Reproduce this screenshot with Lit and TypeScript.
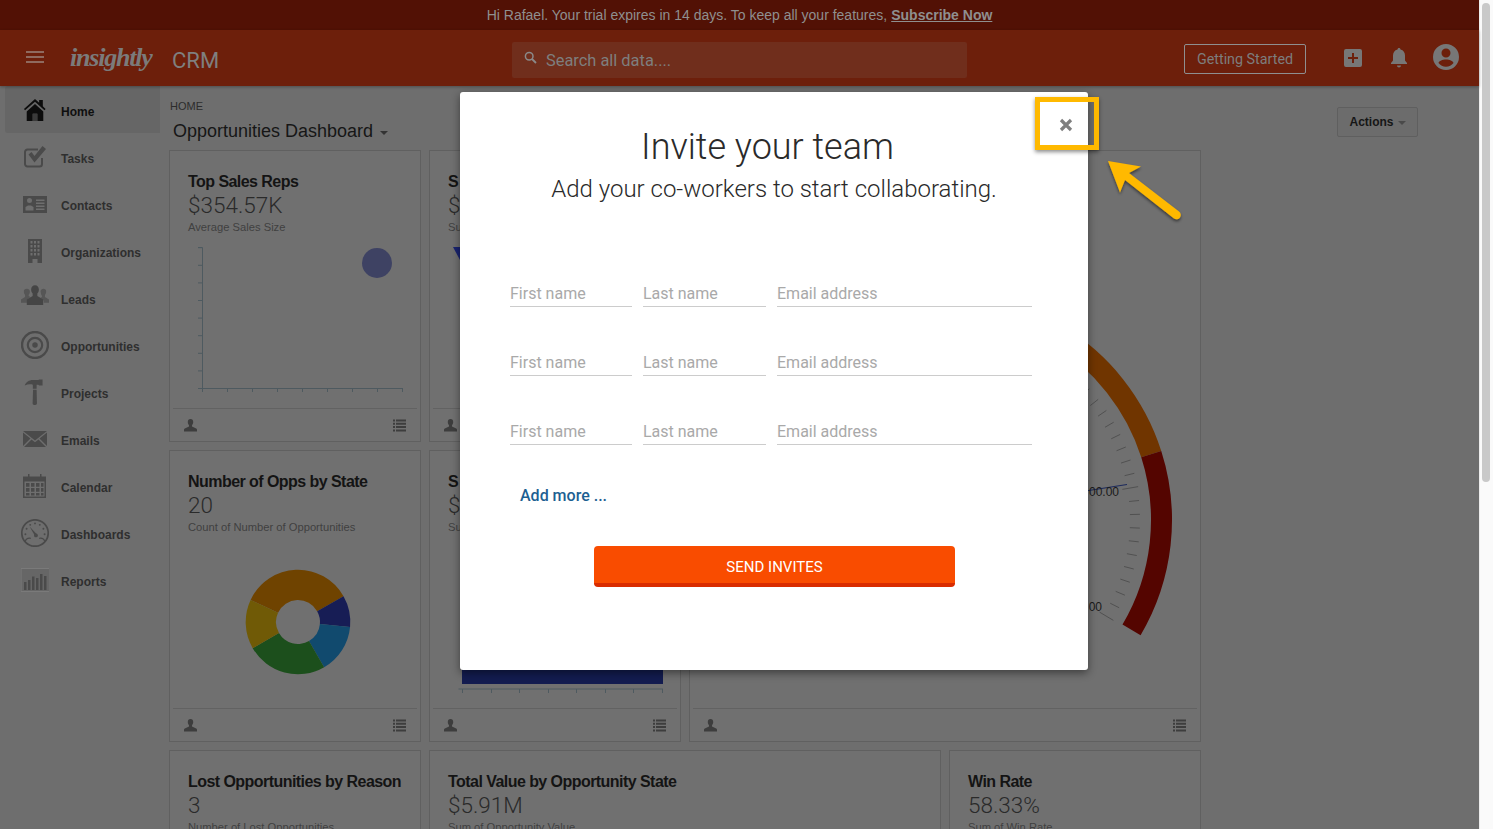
import { LitElement, html, css, svg } from 'lit';
import { customElement } from 'lit/decorators.js';

// point on the gauge, angle in degrees above horizontal
const CX = 945;
const CY = 520;
const pt = (r: number, deg: number) => {
  const a = (deg * Math.PI) / 180;
  return [CX + r * Math.cos(a), CY - r * Math.sin(a)];
};
const arc = (from: number, to: number, color: string) => {
  const [ax, ay] = pt(227, from);
  const [bx, by] = pt(227, to);
  const [cx, cy] = pt(206, to);
  const [dx, dy] = pt(206, from);
  return svg`<path fill=${color} d="M${ax} ${ay}A227 227 0 0 0 ${bx} ${by}L${cx} ${cy}A206 206 0 0 1 ${dx} ${dy}Z"></path>`;
};
const ticks = () => {
  const out = [];
  for (let i = 0; i <= 20; i++) {
    const deg = 50.4 - i * 4.06;
    const major = i % 10 === 0;
    const [x1, y1] = pt(major ? 180 : 185, deg);
    const [x2, y2] = pt(major ? 196 : 195, deg);
    out.push(svg`<line x1=${x1} y1=${y1} x2=${x2} y2=${y2} stroke="#515151" stroke-width="1"></line>`);
  }
  return out;
};

const wedge = (cx: number, cy: number, r: number, r0: number, a: number, b: number, color: string) => {
  const p = (rad: number, deg: number) => [cx + rad * Math.sin((deg * Math.PI) / 180), cy - rad * Math.cos((deg * Math.PI) / 180)];
  const [ax, ay] = p(r, a);
  const [bx, by] = p(r, b);
  const [c, d] = p(r0, b);
  const [e, f] = p(r0, a);
  const large = b - a > 180 ? 1 : 0;
  return svg`<path fill=${color} d="M${ax} ${ay}A${r} ${r} 0 ${large} 1 ${bx} ${by}L${c} ${d}A${r0} ${r0} 0 ${large} 0 ${e} ${f}Z"></path>`;
};

const axisTicks = () => {
  const out = [];
  for (let i = 0; i < 9; i++) {
    const x = 202.5 + i * 25;
    out.push(svg`<line x1=${x} y1="388" x2=${x} y2="392" stroke="#4e5a60"></line>`);
  }
  for (let i = 0; i < 9; i++) {
    const y = 388.5 - i * 17.6;
    out.push(svg`<line x1="198" y1=${y} x2="202" y2=${y} stroke="#4e5a60"></line>`);
  }
  return out;
};

const personIcon = html`<svg class="foot-icon" viewBox="0 0 13 13"><path fill="#3d3d3d" d="M6.5 0C4.7 0 3.8 1.3 3.8 3c0 1.300.5 2.500 1.200 3.200v1.300L.8 9.400C.2 9.700 0 10.200 0 11v1.500h13V11c0-.8-.2-1.300-.8-1.600L8 7.500V6.200C8.700 5.500 9.200 4.300 9.200 3 9.200 1.300 8.300 0 6.500 0z"></path></svg>`;
const listIcon = html`<svg class="foot-icon" viewBox="0 0 13 12"><path fill="#3d3d3d" d="M0 0h2v2H0zM3 0h10v2H3zM0 3.300h2v2H0zM3 3.300h10v2H3zM0 6.600h2v2H0zM3 6.600h10v2H3zM0 9.900h2v2H0zM3 9.900h10v2H3z"></path></svg>`;

const navIcons: Record<string, unknown> = {
  Home: svg`<path fill="#0c0c0c" d="M12 0l4.500 4V1h4v7l3 3-1.200 1.400L12 3 1.200 12.400 0 11zM3 13.500L12 5.500l9 8V24h-6.500v-8h-5v8H3z"></path><path fill="#3a3a3a" d="M9.500 16h5v8h-5z"></path>`,
  Tasks: svg`<path fill="none" stroke="#4a4a4a" stroke-width="2" d="M19 13v6a2.500 2.500 0 0 1-2.500 2.500h-12A2.500 2.500 0 0 1 2 19V7a2.500 2.500 0 0 1 2.500-2.500H15"></path><path fill="#4a4a4a" d="M5.500 9.500l3-2.500 3 4L19.500 1l3.500 3-11.500 13.500z"></path>`,
  Contacts: svg`<path fill="#4a4a4a" fill-rule="evenodd" d="M0 4h24v17H0zM4 8.500a2.500 2.500 0 1 0 5 0 2.500 2.500 0 0 0-5 0zM2.500 18.500h8v-3.500l-2.500-1.500H5l-2.500 1.500zM13 7.500v1.500h8.500V7.500zM13 10.500V12h8.500v-1.500zM13 13.500V15h8.500v-1.500zM13 16.500V18h8.500v-1.500z"></path>`,
  Organizations: svg`<path fill="#4a4a4a" fill-rule="evenodd" d="M5 0h14v24h-4.500v-4h-5v4H5zM7.500 2v2.500h2V2zM11 2v2.500h2V2zM14.500 2v2.500h2V2zM7.500 6v2.500h2V6zM11 6v2.500h2V6zM14.500 6v2.500h2V6zM7.500 10v2.500h2V10zM11 10v2.500h2V10zM14.500 10v2.500h2V10zM7.500 14v2.500h2V14zM11 14v2.500h2V14zM14.500 14v2.500h2V14z"></path>`,
  Leads: svg`<path fill="#565656" d="M5 4a2.500 2.500 0 0 1 2.600 2.700c0 1-.4 2-1 2.600v1l1.500.8-3 2.400V16H0v-2.800l3.500-2V9.300C2.800 8.700 2.500 7.700 2.500 6.700A2.500 2.500 0 0 1 5 4zM19 4a2.500 2.500 0 0 1 2.500 2.700c0 1-.3 2-1 2.600v1.900l3.500 2V16h-4.500v-1.700l-3-2.400 1.400-.8v-1c-.5-.6-.9-1.600-.9-2.600A2.500 2.500 0 0 1 19 4z"></path><path fill="#454545" d="M12 0c2 0 3.300 1.500 3.300 3.700 0 1.500-.6 2.800-1.300 3.500v2l5 3V17H5v-4.800l5-3v-2C9.300 6.500 8.700 5.200 8.700 3.700 8.700 1.500 10 0 12 0z" transform="translate(0 1)"></path>`,
  Opportunities: svg`<circle cx="12" cy="12" r="10.800" fill="none" stroke="#4a4a4a" stroke-width="2"></circle><circle cx="12" cy="12" r="6" fill="none" stroke="#4a4a4a" stroke-width="1.800"></circle><circle cx="12" cy="12" r="2.300" fill="#4a4a4a"></circle>`,
  Projects: svg`<path fill="#4a4a4a" d="M2.500 6C3.500 3 6.500 1 10 1h5l1-.5h3V6h-3l-1-.8h-1.500V9H10V5.200C7.500 4.600 5 4.800 2.500 6zM10.200 10h3.300l.3 12.500c0 1-.6 1.500-1.500 1.500h-1c-1 0-1.500-.5-1.500-1.500z"></path>`,
  Emails: svg`<path fill="#4a4a4a" d="M0 4h24L12 13.500zM0 5.500l7.500 6L0 19zM24 5.500l-7.500 6L24 19zM8.500 12.500l3.500 2.800 3.500-2.800L23 20H1z"></path>`,
  Calendar: svg`<path fill="#4a4a4a" fill-rule="evenodd" d="M5 0h1.500v2.500H17V0h1.500v2.500H23V24H0V2.500H5zM1.500 7.500v15h20v-15zM3 9h3.500v3.700H3zM8 9h3.500v3.700H8zM13 9h3.500v3.700H13zM18 9h2.500v3.700H18zM3 14h3.500v3.700H3zM8 14h3.500v3.700H8zM13 14h3.500v3.700H13zM18 14h2.500v3.700H18zM3 19h3.500v2.500H3zM8 19h3.500v2.500H8zM13 19h3.500v2.500H13zM18 19h2.500v2.500H18z"></path>`,
  Dashboards: svg`<circle cx="12" cy="12" r="11" fill="none" stroke="#4a4a4a" stroke-width="1.400"></circle><path fill="none" stroke="#4a4a4a" stroke-width="1" d="M3.500 19.500c1-2.500 3-3.500 5-3M20.500 19.500c-1-2.500-3-3.500-5-3"></path><path fill="#4a4a4a" d="M7.500 6.500l6 6.500-1.500 1.500z"></path><circle cx="12.800" cy="14" r="1.600" fill="#4a4a4a"></circle><g fill="#4a4a4a"><circle cx="12" cy="4" r=".8"></circle><circle cx="16" cy="5.200" r=".8"></circle><circle cx="19" cy="8.500" r=".8"></circle><circle cx="20" cy="13" r=".8"></circle><circle cx="8" cy="5.200" r=".8"></circle><circle cx="5" cy="8.500" r=".8"></circle><circle cx="4" cy="13" r=".8"></circle></g>`,
  Reports: svg`<rect x="-2" y=".5" width="29" height="23" fill="#666" stroke="#7a7a7a"></rect><path fill="#4a4a4a" d="M1 14h2.500v8H1zM5 12h2.500v10H5zM9 8.500h2.500V22H9zM13 10h2.500v12H13zM17 6h2.500v16H17zM21 8h2.500v14H21z"></path>`,
};

// icons sharing the 24 box are scaled up to the drawn size
const navScale: Record<string, number> = {
  Home: 0.92,
  Leads: 1.17,
  Opportunities: 1.2,
  Projects: 1.08,
  Dashboards: 1.2,
};

const navItems = ['Home', 'Tasks', 'Contacts', 'Organizations', 'Leads', 'Opportunities', 'Projects', 'Emails', 'Calendar', 'Dashboards', 'Reports'];

const inviteRows = [0, 1, 2];

@customElement('app-root')
export class AppRoot extends LitElement {
  static styles = css`
    :host {
      display: block;
      width: 1493px;
      height: 829px;
      overflow: hidden;
      position: relative;
      font-family: 'Liberation Sans', Arial, sans-serif;
    }
    .frame {
      display: flex;
      height: 829px;
    }
    .page {
      flex: 1;
      min-width: 0;
      display: flex;
      flex-direction: column;
      background: #6e6e6e;
    }
    .scrollbar {
      width: 14px;
      background: #fafafa;
      border-left: 1px solid #ececec;
      box-sizing: border-box;
      padding: 3px 3px 0 2px;
    }
    .thumb {
      height: 479px;
      background: #c9c9c9;
      border-radius: 5px;
    }
    .banner {
      height: 30px;
      background: #521105;
      color: #8f8f8f;
      font-size: 14px;
      display: flex;
      align-items: center;
      justify-content: center;
      gap: 4px;
    }
    .banner b {
      text-decoration: underline;
    }
    .topbar {
      height: 56px;
      background: #6d1f0b;
      display: flex;
      align-items: center;
      box-shadow: 0 1px 3px rgba(0, 0, 0, 0.3);
      position: relative;
      z-index: 1;
    }
    .burger {
      width: 18px;
      height: 12px;
      flex: none;
      margin-left: 26px;
      margin-bottom: 2px;
      border-top: 2px solid #8f6a5f;
      border-bottom: 2px solid #8f6a5f;
      box-sizing: border-box;
    }
    .burger i {
      display: block;
      height: 2px;
      margin-top: 3px;
      background: #8f6a5f;
    }
    .logo {
      margin-left: 26px;
      width: 84px;
      flex: none;
      font-family: 'Liberation Serif', serif;
      font-style: italic;
      font-weight: 700;
      font-size: 26px;
      letter-spacing: -1.2px;
      color: #7b7b7b;
      line-height: 1;
      white-space: nowrap;
    }
    .crm {
      margin-left: 18px;
      flex: none;
      font-family: Roboto, sans-serif;
      font-size: 22px;
      color: #7f7f7f;
      width: 340px;
      margin-top: 4px;
    }
    .search {
      width: 455px;
      height: 36px;
      flex: none;
      background: #702e1c;
      border-radius: 2px;
      display: flex;
      align-items: center;
      color: #7e7e7e;
      font-family: Roboto, sans-serif;
      font-size: 16.400px;
      box-sizing: border-box;
      padding-left: 12px;
      gap: 9px;
      margin-top: 4px;
    }
    .search svg {
      width: 13px;
      height: 13px;
      margin-bottom: 6px;
    }
    .started {
      margin-left: 217px;
      width: 122px;
      height: 30px;
      flex: none;
      box-sizing: border-box;
      border: 1px solid #8f8f8f;
      border-radius: 2px;
      color: #7d7d7d;
      font-size: 14.300px;
      font-family: Roboto, sans-serif;
      display: flex;
      align-items: center;
      justify-content: center;
      margin-top: 2px;
    }
    .top-icon {
      display: block;
      flex: none;
    }
    .plus {
      width: 18px;
      height: 18px;
      margin-left: 38px;
    }
    .bell {
      width: 18px;
      height: 20px;
      margin-left: 28px;
    }
    .avatar {
      width: 26px;
      height: 26px;
      margin-left: 25px;
      margin-top: -2px;
    }
    .body {
      flex: 1;
      min-height: 0;
      display: flex;
    }
    .side {
      width: 160px;
      flex: none;
    }
    .nav {
      height: 47px;
      box-sizing: border-box;
      padding-top: 5px;
      display: flex;
      align-items: center;
      margin-left: 5px;
      border-radius: 3px 0 0 3px;
      font-size: 12px;
      font-weight: 700;
      color: #2f2f2f;
    }
    .nav.active {
      background: #666;
      color: #0f0f0f;
    }
    .nav svg {
      width: 28px;
      height: 28px;
      margin: -4px 12px 0 16px;
      flex: none;
    }
    .main {
      flex: 1;
      min-width: 0;
      padding: 14px 0 0 10px;
    }
    .crumb {
      font-size: 11px;
      line-height: 13px;
      color: #2c2c2c;
    }
    .title-row {
      display: flex;
      justify-content: space-between;
      height: 37px;
    }
    .dash {
      font-size: 18px;
      line-height: 22px;
      color: #161616;
      margin: 7px 0 0 3px;
      display: flex;
      align-items: center;
      gap: 7px;
      height: 22px;
    }
    .caret {
      width: 0;
      height: 0;
      border: 4px solid transparent;
      border-top-color: #333;
      border-bottom: 0;
      margin-top: 3px;
    }
    .caret.small {
      border-top-color: #4a4a4a;
      margin-top: 1px;
    }
    .actions {
      width: 81px;
      height: 30px;
      box-sizing: border-box;
      margin: -6px 61px 0 0;
      border: 1px solid #5f5f5f;
      border-radius: 2px;
      background: #6c6c6c;
      font-size: 12px;
      font-weight: 700;
      color: #161616;
      display: flex;
      align-items: center;
      justify-content: center;
      gap: 4px;
    }
    .grid {
      display: grid;
      grid-template-columns: 252px 252px 252px 252px;
      grid-auto-rows: 292px;
      gap: 8px;
      margin-left: -1px;
    }
    .card {
      box-sizing: border-box;
      border: 1px solid #606060;
      background: #707070;
      display: flex;
      flex-direction: column;
      min-width: 0;
      overflow: hidden;
    }
    .wide {
      grid-column: span 2;
    }
    .tall {
      grid-row: span 2;
      grid-column: span 2;
    }
    .head {
      height: 84px;
      flex: none;
      box-sizing: border-box;
      padding: 21px 18px 0;
      white-space: nowrap;
    }
    .card-title {
      font-size: 16px;
      line-height: 20px;
      font-weight: 700;
      letter-spacing: -0.55px;
      color: #141414;
    }
    .card-value {
      font-family: Roboto, sans-serif;
      font-weight: 300;
      font-size: 22.500px;
      line-height: 26px;
      margin-bottom: 2px;
      color: #2a2a2a;
    }
    .card-sub {
      font-size: 11.200px;
      line-height: 15px;
      color: #404040;
    }
    .chart {
      flex: 1;
      min-height: 0;
    }
    .chart svg {
      display: block;
      width: 100%;
      height: 100%;
    }
    .foot {
      height: 33px;
      flex: none;
      margin: 0 3px;
      box-sizing: border-box;
      border-top: 1px solid #626262;
      display: flex;
      align-items: center;
      justify-content: space-between;
      padding: 0 11px;
    }
    .foot-icon {
      width: 13px;
      height: 13px;
      display: block;
    }
    .modal {
      position: absolute;
      left: 460px;
      top: 92px;
      width: 628px;
      height: 578px;
      box-sizing: border-box;
      background: #fff;
      border-radius: 3px;
      box-shadow: 0 3px 9px rgba(0, 0, 0, 0.45);
      font-family: Roboto, sans-serif;
      padding: 32px 50px 0;
    }
    .modal h1 {
      margin: 0 0 0 -13px;
      text-align: center;
      font-weight: 300;
      font-size: 36px;
      line-height: 46px;
      color: #2a2a2a;
    }
    .modal h2 {
      margin: 3px -15px 72px -15px;
      text-align: center;
      font-weight: 300;
      font-size: 24px;
      line-height: 32px;
      color: #2a2a2a;
    }
    .row {
      display: grid;
      grid-template-columns: 122px 123px 255px;
      column-gap: 11px;
      margin-bottom: 39px;
    }
    .row input {
      border: 0;
      border-bottom: 1px solid #ccc;
      outline: 0;
      height: 30px;
      padding: 4px 0 0;
      width: 100%;
      box-sizing: border-box;
      font-family: Roboto, sans-serif;
      font-size: 16px;
      background: transparent;
    }
    .row input::placeholder {
      color: #a9a9a9;
      opacity: 1;
    }
    .more {
      margin: 0 0 0 10px;
      color: #1d5f92;
      font-size: 16px;
      font-weight: 500;
      line-height: 19px;
      padding-top: 2px;
    }
    .send {
      display: block;
      margin: 41px 0 0 84px;
      width: 361px;
      height: 41px;
      border: 0;
      border-bottom: 4px solid #d92c00;
      border-radius: 4px;
      background: #f94c00;
      color: #fff;
      font-family: Roboto, sans-serif;
      font-weight: 400;
      font-size: 15px;
      padding: 5px 0 0;
    }
    .close {
      position: absolute;
      left: 1059px;
      top: 118px;
      width: 14px;
      height: 14px;
    }
    .callout {
      position: absolute;
      left: 1035px;
      top: 97px;
      width: 64px;
      height: 53px;
      box-sizing: border-box;
      border: 5px solid #ffb900;
      box-shadow: 0 2px 4px rgba(0, 0, 0, 0.45);
    }
    .arrow {
      position: absolute;
      left: 1100px;
      top: 152px;
      width: 90px;
      height: 76px;
      overflow: visible;
    }
  `;

  private card(title: string, value: string, sub: string, chart: unknown = null, cls = '') {
    return html`<div class="card ${cls}">
      <div class="head">
        <div class="card-title">${title}</div>
        <div class="card-value">${value}</div>
        <div class="card-sub">${sub}</div>
      </div>
      <div class="chart">${chart}</div>
      <div class="foot">${personIcon}${listIcon}</div>
    </div>`;
  }

  render() {
    const scatter = html`<svg viewBox="170 235 250 173">
      <path d="M198 247.500h4.500V388.500H403" fill="none" stroke="#4e5a60"></path>
      ${axisTicks()}
      <circle cx="377" cy="263" r="15" fill="#3e4263"></circle>
    </svg>`;
    const funnel = html`<svg viewBox="430 235 250 173">
      <path d="M453 247h7v13z" fill="#1a2470"></path>
    </svg>`;
    const donut = html`<svg viewBox="170 535 250 173">
      ${wedge(298, 622, 52.300, 22, -65, 60.5, '#6f4300')}
      ${wedge(298, 622, 52.300, 22, 60.5, 95.5, '#171d55')}
      ${wedge(298, 622, 52.300, 22, 95.5, 150, '#114a6e')}
      ${wedge(298, 622, 52.300, 22, 150, 240, '#1c4f1c')}
      ${wedge(298, 622, 52.300, 22, 240, 295, '#705a06')}
    </svg>`;
    const bars = html`<svg viewBox="430 535 250 173">
      <rect x="462" y="640" width="201" height="44" fill="#131c50"></rect>
      <path d="M458.500 689H663" stroke="#4e5a60" fill="none"></path>
      ${[462, 491, 519, 548, 576, 605, 633, 662].map(x => svg`<line x1=${x + 0.5} y1="689" x2=${x + 0.5} y2="693" stroke="#4e5a60"></line>`)}
    </svg>`;
    const gauge = html`<svg viewBox="690 235 510 473">
      ${arc(17.7, 100, '#703500')}
      ${arc(-30.5, 17.7, '#540500')}
      ${ticks()}
      <line x1="1060" y1="495" x2="1127" y2="484.500" stroke="#1d2a5c" stroke-width="1.200"></line>
      <text x="1119" y="496" text-anchor="end" font-size="12" font-family="Liberation Sans" fill="#1a1a1a">00.00</text>
      <text x="1102" y="611" text-anchor="end" font-size="12" font-family="Liberation Sans" fill="#1a1a1a">00</text>
    </svg>`;

    return html`
      <div class="frame">
        <div class="page">
          <div class="banner">Hi Rafael. Your trial expires in 14 days. To keep all your features, <b>Subscribe Now</b></div>
          <div class="topbar">
            <div class="burger"><i></i></div>
            <div class="logo">insightly</div>
            <div class="crm">CRM</div>
            <div class="search">
              <svg viewBox="0 0 13 13"><circle cx="5.200" cy="5.200" r="3.800" fill="none" stroke="#8a8a8a" stroke-width="1.500"></circle><path d="M8 8l4 4" stroke="#8a8a8a" stroke-width="1.800"></path></svg>
              <span>Search all data....</span>
            </div>
            <div class="started">Getting Started</div>
            <svg class="top-icon plus" viewBox="0 0 18 18"><path fill="#777" fill-rule="evenodd" d="M2 0h14a2 2 0 0 1 2 2v14a2 2 0 0 1-2 2H2a2 2 0 0 1-2-2V2a2 2 0 0 1 2-2zM8 4v4H4v2h4v4h2v-4h4V8h-4V4z"></path></svg>
            <svg class="top-icon bell" viewBox="0 0 18 20"><path fill="#777" d="M9 0c.9 0 1.500.7 1.500 1.600 3 .7 4.500 3 4.500 6v4.900l2 2.500v1H1v-1l2-2.500V7.600c0-3 1.500-5.300 4.500-6C7.500.7 8.100 0 9 0zM7 17.500h4c0 1.200-.9 2-2 2s-2-.8-2-2z"></path></svg>
            <svg class="top-icon avatar" viewBox="0 0 26 26"><path fill="#777" fill-rule="evenodd" d="M13 0a13 13 0 1 1 0 26 13 13 0 0 1 0-26zM13 4.500a4.500 4.500 0 1 0 0 9 4.500 4.500 0 0 0 0-9zM13 15.500c-3.500 0-7 1.500-7.500 3.500 1.800 2.300 4.500 3.700 7.500 3.700s5.700-1.400 7.500-3.700c-.5-2-4-3.500-7.500-3.500z"></path></svg>
          </div>
          <div class="body">
            <div class="side">
              ${navItems.map(name => html`<div class="nav ${name === 'Home' ? 'active' : ''}">
                <svg viewBox="0 0 28 28"><g transform="translate(14 14) scale(${navScale[name] ?? 1}) translate(-12 -12)">${navIcons[name]}</g></svg>
                ${name}
              </div>`)}
            </div>
            <div class="main">
              <div class="crumb">HOME</div>
              <div class="title-row">
                <div class="dash">Opportunities Dashboard <span class="caret"></span></div>
                <div class="actions">Actions <span class="caret small"></span></div>
              </div>
              <div class="grid">
                ${this.card('Top Sales Reps', '$354.57K', 'Average Sales Size', scatter)}
                ${this.card('S', '$', 'Su', funnel)}
                ${this.card('', '', '', gauge, 'tall')}
                ${this.card('Number of Opps by State', '20', 'Count of Number of Opportunities', donut)}
                ${this.card('S', '$', 'Su', bars)}
                ${this.card('Lost Opportunities by Reason', '3', 'Number of Lost Opportunities')}
                ${this.card('Total Value by Opportunity State', '$5.91M', 'Sum of Opportunity Value', null, 'wide')}
                ${this.card('Win Rate', '58.33%', 'Sum of Win Rate')}
              </div>
            </div>
          </div>
        </div>
        <div class="scrollbar"><div class="thumb"></div></div>
      </div>

      <div class="modal">
        <h1>Invite your team</h1>
        <h2>Add your co-workers to start collaborating.</h2>
        ${inviteRows.map(() => html`<div class="row">
          <input placeholder="First name" />
          <input placeholder="Last name" />
          <input placeholder="Email address" />
        </div>`)}
        <div class="more">Add more ...</div>
        <button class="send">SEND INVITES</button>
      </div>
      <svg class="close" viewBox="0 0 14 14"><path d="M2 2l10 10M12 2L2 12" stroke="#7f7f7f" stroke-width="3.200" fill="none"></path></svg>
      <div class="callout"></div>
      <svg class="arrow" viewBox="1100 152 90 76">
        <defs><filter id="ds" x="-20%" y="-20%" width="140%" height="140%"><feDropShadow dx="0" dy="2" stdDeviation="1.500" flood-color="#000" flood-opacity=".5"></feDropShadow></filter></defs>
        <g filter="url(#ds)" fill="#ffb900">
          <path d="M1108 161l33 5.500-12 6.500 50 38.500a4 4 0 0 1-5 7L1125 180l-5 12.500z"></path>
        </g>
      </svg>
    `;
  }
}
